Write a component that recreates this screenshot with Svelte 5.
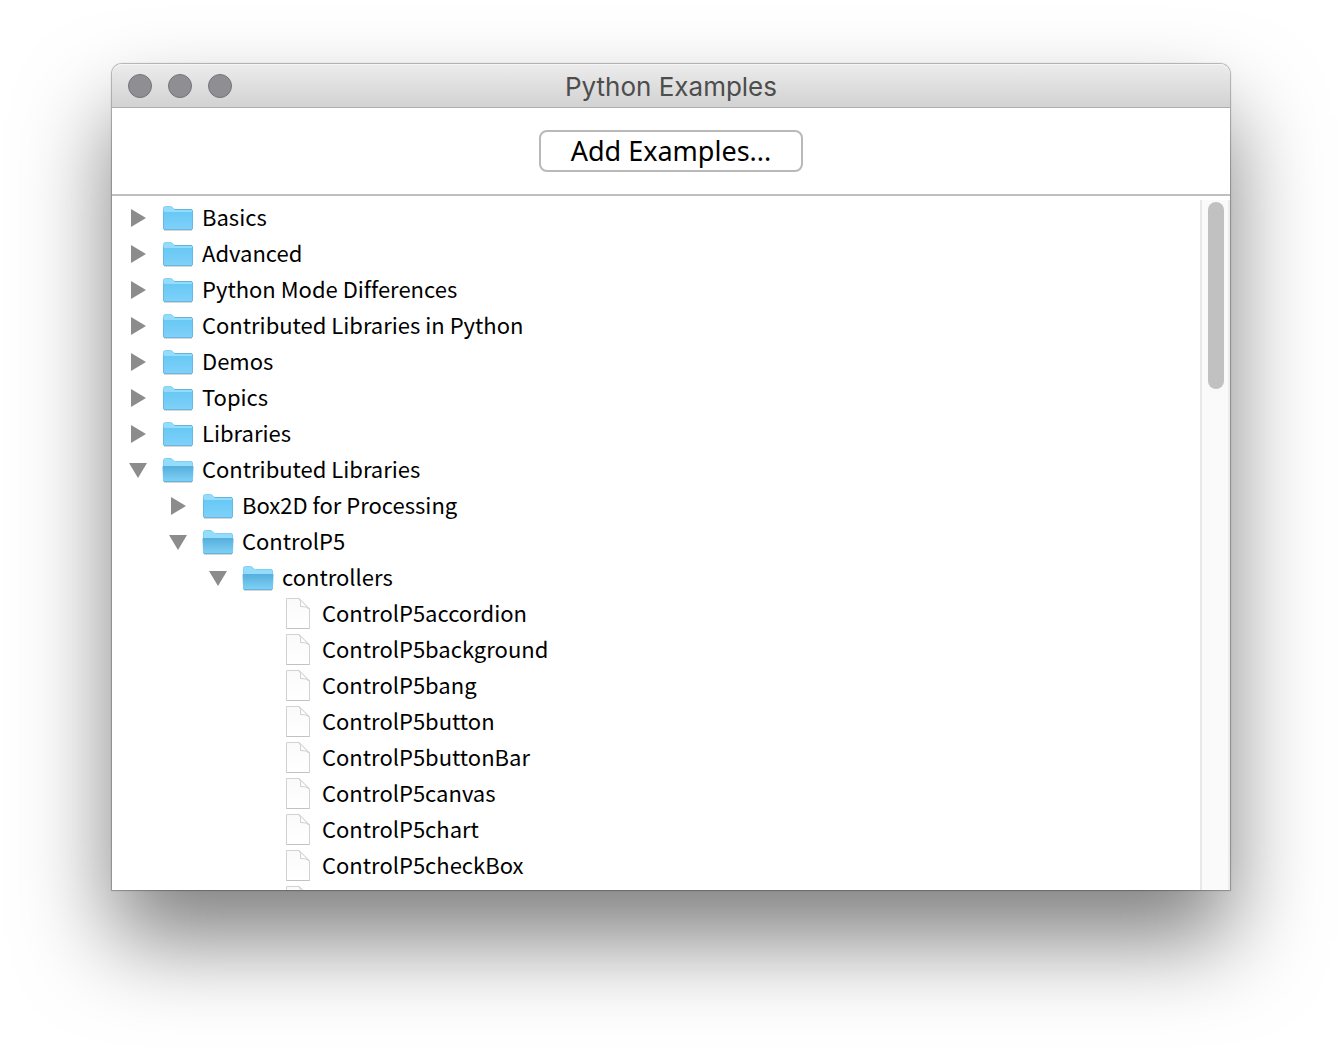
<script>
  const folder = (name, children = [], open = false) => ({ name, children, open, folder: true });
  const sketch = (name) => ({ name, folder: false });

  let tree = $state([
    folder('Basics'),
    folder('Advanced'),
    folder('Python Mode Differences'),
    folder('Contributed Libraries in Python'),
    folder('Demos'),
    folder('Topics'),
    folder('Libraries'),
    folder('Contributed Libraries', [
      folder('Box2D for Processing'),
      folder('ControlP5', [
        folder('controllers', [
          sketch('ControlP5accordion'),
          sketch('ControlP5background'),
          sketch('ControlP5bang'),
          sketch('ControlP5button'),
          sketch('ControlP5buttonBar'),
          sketch('ControlP5canvas'),
          sketch('ControlP5chart'),
          sketch('ControlP5checkBox'),
          sketch('')
        ], true)
      ], true)
    ], true)
  ]);
</script>

<svelte:head><title>Python Examples</title></svelte:head>

<svg class="defs" aria-hidden="true">
  <defs>
    <linearGradient id="front" x1="0" y1="0" x2="0" y2="1">
      <stop offset="0" stop-color="#68c8f5" />
      <stop offset="1" stop-color="#7fd1f9" />
    </linearGradient>
    <linearGradient id="flap" x1="0" y1="0" x2="0" y2="1">
      <stop offset="0" stop-color="#56aedb" />
      <stop offset="1" stop-color="#80d2f8" />
    </linearGradient>
    <linearGradient id="sheet" x1="0" y1="0" x2="0" y2="1">
      <stop offset="0" stop-color="#fafafa" />
      <stop offset="1" stop-color="#ffffff" />
    </linearGradient>
  </defs>
</svg>

{#snippet folderIcon(open)}
  <svg class="icon" viewBox="0 0 32 32" aria-hidden="true">
    <path d="M2 28.500H30" stroke="#000" stroke-opacity=".16" />
    <path d="M1.500 26V6.500Q1.500 4.500 3.500 4.500H8.500Q9.500 4.500 10.500 5.500L11.500 6.500Q12.500 7.500 13.500 7.500H29Q30.500 7.500 30.500 9V26Q30.500 27.500 29 27.500H3Q1.500 27.500 1.500 26Z" fill="#94dcfc" stroke="#80cff3" />
    {#if open}
      <path d="M.5 13Q.5 12 1.500 12H30.500Q31.500 12 31.500 13L31 26Q31 28 29.500 28H2.500Q1 28 1 26Z" fill="url(#flap)" />
      <path d="M1.500 26.500Q2 27.500 3 27.500H29Q30 27.500 30.500 26.500" fill="none" stroke="#61b4da" />
    {:else}
      <path d="M1.500 10H30.500V26Q30.500 27.500 29 27.500H3Q1.500 27.500 1.500 26Z" fill="url(#front)" />
      <path d="M12.500 7.500H30" stroke="#62b3dc" />
      <path d="M1.500 9V26Q1.500 27.500 3 27.500H29Q30.500 27.500 30.500 26V8.500" fill="none" stroke="#66b9e1" />
    {/if}
  </svg>
{/snippet}

{#snippet sheetIcon()}
  <svg class="icon" viewBox="0 0 32 32" aria-hidden="true">
    <path d="M4.500 .5H17L27.500 11V30.500H4.500Z" fill="url(#sheet)" stroke="#d2d2d2" />
    <path d="M4.500 30.500H27.500" stroke="#c2c2c2" />
    <path d="M17 .5Q19.500 3 18.500 8.500Q24 8 27.500 11Z" fill="#fff" stroke="#cfcfcf" />
  </svg>
{/snippet}

{#snippet branch(nodes)}
  <ul>
    {#each nodes as node}
      <li>
        {#if node.folder}
          <button class="row" aria-expanded={node.open} onclick={() => (node.open = !node.open)}>
            <svg class="arrow" viewBox="0 0 18 18" aria-hidden="true">
              {#if node.open}
                <path d="M0 2H18L9 17Z" />
              {:else}
                <path d="M2 0L17 9L2 18Z" />
              {/if}
            </svg>
            {@render folderIcon(node.open)}
            <span class="label">{node.name}</span>
          </button>
          {#if node.open}{@render branch(node.children)}{/if}
        {:else}
          <div class="row sketch">
            {@render sheetIcon()}
            <span class="label">{node.name}</span>
          </div>
        {/if}
      </li>
    {/each}
  </ul>
{/snippet}

<div class="desktop">
  <main class="window">
    <header class="titlebar">
      <div class="lights">
        <button aria-label="Close"></button>
        <button aria-label="Minimize"></button>
        <button aria-label="Zoom"></button>
      </div>
      <h1>Python Examples</h1>
    </header>
    <div class="toolbar">
      <button class="add">Add Examples...</button>
    </div>
    <div class="pane">
      <nav class="tree" aria-label="Examples">{@render branch(tree)}</nav>
      <div class="track"><div class="thumb"></div></div>
    </div>
  </main>
</div>

<style>
  :global(body) {
    margin: 0;
    background: #fff;
  }
  .defs {
    position: absolute;
    width: 0;
    height: 0;
  }
  .desktop {
    box-sizing: border-box;
    height: 100vh;
    padding: 64px 112px 160px;
    overflow: hidden;
  }
  .window {
    display: flex;
    flex-direction: column;
    height: 100%;
    background: #fff;
    border-radius: 10px 10px 0 0;
    box-shadow:
      0 0 1px 1px rgba(0, 0, 0, 0.28),
      0 50px 90px rgba(0, 0, 0, 0.5);
  }
  .titlebar {
    flex: none;
    display: grid;
    grid-template-columns: 1fr auto 1fr;
    align-items: center;
    box-sizing: border-box;
    height: 44px;
    padding: 0 16px;
    background: linear-gradient(#ececec, #d2d2d2);
    border-bottom: 1px solid #b0adb0;
    border-radius: 10px 10px 0 0;
    box-shadow: inset 0 1px #f5f5f5;
  }
  .lights {
    display: flex;
    gap: 16px;
  }
  .lights button {
    box-sizing: border-box;
    width: 24px;
    height: 24px;
    padding: 0;
    border: 1px solid #747376;
    border-radius: 50%;
    background: #8f8e93;
  }
  h1 {
    margin: 0;
    padding-top: 2px;
    font: 400 26px/32px Inter, sans-serif;
    color: #4d4d4d;
  }
  .toolbar {
    flex: none;
    display: flex;
    justify-content: center;
    padding: 22px 0;
    border-bottom: 2px solid #bfbfbf;
  }
  .add {
    box-sizing: border-box;
    height: 42px;
    padding: 0 30px;
    border: 2px solid #b9b9b9;
    border-radius: 8px;
    background: #fff;
    color: #000;
    font: 400 27px/36px "Noto Sans", sans-serif;
  }
  .pane {
    flex: 1;
    display: flex;
    min-height: 0;
    padding-top: 4px;
  }
  .tree {
    flex: 1;
    min-width: 0;
    overflow: hidden;
    padding-left: 17px;
  }
  ul {
    margin: 0;
    padding: 0;
    list-style: none;
  }
  ul ul {
    padding-left: 40px;
  }
  .row {
    display: flex;
    align-items: center;
    width: 100%;
    height: 36px;
    padding: 0;
    border: 0;
    background: none;
    color: #000;
    font: 400 22px/32px "Noto Sans CJK SC", sans-serif;
    font-variant-ligatures: none;
    text-align: left;
    white-space: nowrap;
  }
  .label {
    padding-bottom: 4px;
  }
  .arrow {
    flex: none;
    width: 18px;
    height: 18px;
    margin-right: 15px;
    fill: #8c8c8c;
  }
  .icon {
    flex: none;
    width: 32px;
    height: 32px;
    margin-right: 8px;
  }
  .sketch {
    padding-left: 33px;
  }
  .track {
    flex: none;
    box-sizing: border-box;
    width: 30px;
    padding: 2px 4px 0 6px;
    background: #fafafa;
    border-left: 2px solid #e8e8e8;
    border-right: 2px solid #ededed;
  }
  .thumb {
    height: 187px;
    border-radius: 8px;
    background: #c1c1c1;
  }
</style>
